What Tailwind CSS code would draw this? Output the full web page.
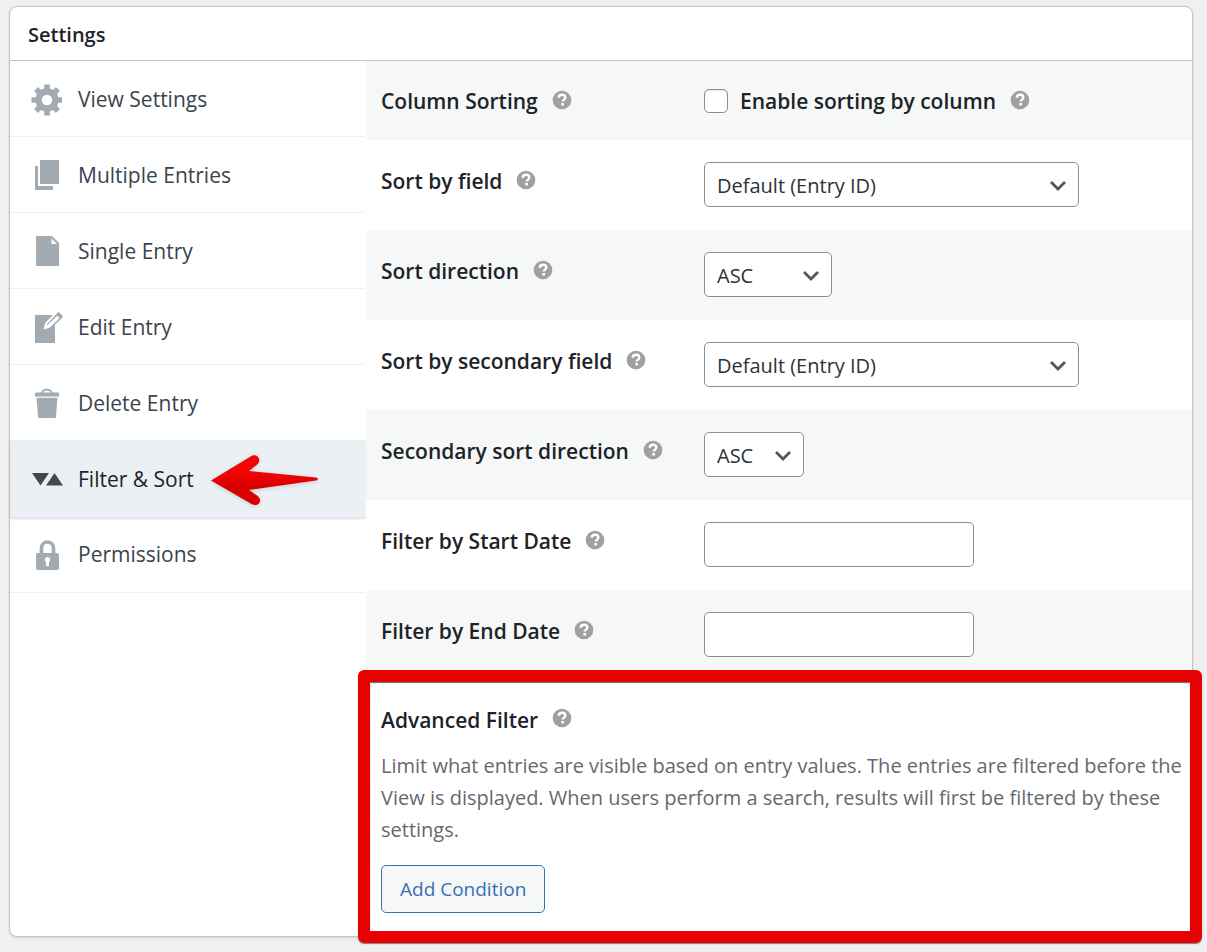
<!DOCTYPE html>
<html lang="en">
<head>
  <meta charset="UTF-8">
  <meta name="viewport" content="width=device-width, initial-scale=1.0">
  <title>Settings</title>
  <script src="https://cdn.jsdelivr.net/npm/@tailwindcss/browser@4"></script>
</head>
<body class="bg-[#f0f0f1] min-h-screen pt-[6px] pl-[9px] pr-[14px] pb-[15px] font-['Open_Sans','Noto_Sans',sans-serif] text-[#1d2327]">
  <!-- shared icons -->
  <svg class="hidden">
    <symbol id="help" viewBox="0 0 20 20">
      <circle cx="10" cy="10" r="9.3" fill="#a0a0a0"/>
      <path d="M6.700 7.800C6.800 5.700 8.200 4.800 10.100 4.800c1.900 0 3.200 1 3.200 2.600 0 1.300-.7 1.900-1.500 2.500-.8.5-1.100.8-1.100 1.700" fill="none" stroke="#fff" stroke-width="2.400"/>
      <rect x="9.300" y="13" width="2.700" height="2.500" fill="#fff"/>
    </symbol>
    <symbol id="chevron" viewBox="0 0 18 12">
      <path d="M2 2l7 7 7-7" fill="none" stroke="#50575e" stroke-width="2.800"/>
    </symbol>
  </svg>

  <main class="bg-white border border-[#c3c4c7] rounded-lg shadow-sm">
    <h2 class="h-[54px] px-[18px] pt-0.5 flex items-center border-b border-[#c3c4c7] text-xl font-semibold">Settings</h2>
    <div class="flex">
      <nav class="w-[356px] shrink-0 pr-px text-[21px] text-[#3c434a]">
        <a href="#view" class="h-[76px] pl-5 pt-0.5 flex items-center gap-4 border-b border-[#ebf0f5]">
          <svg class="size-8" viewBox="-17 -16 32 32" fill="#a2aab2">
            <circle r="8.500" fill="none" stroke="#a2aab2" stroke-width="6.400"/>
            <path d="M-2.800-15.500h5.600V-10h-5.600zM-2.800 10h5.600v5.500h-5.600zM-15.500-2.800h5.500v5.600h-5.500zM10-2.800h5.500v5.600H10z"/>
            <path d="M-2.800-15.500h5.600V-10h-5.600zM-2.800 10h5.600v5.500h-5.600zM-15.500-2.800h5.500v5.600h-5.500zM10-2.800h5.500v5.600H10z" transform="rotate(45)"/>
          </svg>
          View Settings
        </a>
        <a href="#multiple" class="h-[76px] pl-5 pt-0.5 flex items-center gap-4 border-b border-[#ebf0f5]">
          <svg class="size-8" viewBox="0 1 32 32" fill="#a2aab2">
            <path d="M10 1h19v24H10zM5 7h3v20h15v4H5z"/>
          </svg>
          Multiple Entries
        </a>
        <a href="#single" class="h-[76px] pl-5 pt-0.5 flex items-center gap-4 border-b border-[#ebf0f5]">
          <svg class="size-8" viewBox="0 1 32 32" fill="#a2aab2">
            <path d="M6 1h16l7 7v23H6z"/>
            <path d="M21.500 3.500V9H27z" fill="#fff"/>
          </svg>
          Single Entry
        </a>
        <a href="#edit" class="h-[76px] pl-5 pt-0.5 flex items-center gap-4 border-b border-[#ebf0f5]">
          <svg class="size-8 overflow-visible" viewBox="0 1 32 32" fill="#a2aab2">
            <path d="M5 4h18L15.500 11.500l-2 6 .5 1 6-2.500 5-5V32H5z"/>
            <path d="M16.500 18l1.200-4.200L27.500 4l2.800 2.800-9.800 9.200z" fill="#fff"/>
            <path d="M25.500 4l2.200-2.300c.6-.6 1.200-.6 1.800 0l3 3c.6.6.6 1.200 0 1.800L21 17.500l-3.500 1.300 2.500-2L29.500 7l-2.300-2.200L17 14.500V13z"/>
          </svg>
          Edit Entry
        </a>
        <a href="#delete" class="h-[76px] pl-5 pt-0.5 flex items-center gap-4 border-b border-[#ebf0f5]">
          <svg class="size-8" viewBox="0 0 32 32" fill="#a2aab2">
            <path d="M12 5c.5-4.500 9-4.500 9.500 0" fill="none" stroke="#a2aab2" stroke-width="1.800"/>
            <path d="M6 4.500h22c.7 0 1 .3 1 1v3H5v-3c0-.7.3-1 1-1zM6.500 9.700h21L26 28.500c-.1 1-.7 1.500-1.600 1.500H9.600c-.9 0-1.500-.5-1.600-1.500z"/>
          </svg>
          Delete Entry
        </a>
        <a href="#filter" aria-current="page" class="relative h-[77px] pl-5 pt-0.5 flex items-center gap-4 border-b border-[#dfe6f3] bg-[#ebf0f5] text-[#1d2327] shadow-sm">
          <svg class="size-8 overflow-visible" viewBox="0 0 32 32" fill="#41484f">
            <path d="M2 9h17l-8.500 12.500zM16 21.500h17L24.500 9z"/>
          </svg>
          Filter &amp; Sort
          <!-- pointer arrow -->
          <svg class="absolute left-[200px] top-[13px] w-[112px] h-[52px] drop-shadow-sm" viewBox="0 0 112 52">
            <defs>
              <linearGradient id="red" x1="0" y1="0" x2="0" y2="1">
                <stop offset=".35" stop-color="#f20505"/>
                <stop offset=".6" stop-color="#d90000"/>
              </linearGradient>
            </defs>
            <path d="M1 26.500L41 2.200c6-3.500 11 3.500 6.500 8L39 17l67 6.500c2.500.5 2.500 2.800 0 3L39 36l8 5.500c6.500 4.500 1.500 12.500-5.500 8.500z" fill="url(#red)"/>
          </svg>
        </a>
        <a href="#permissions" class="h-[75px] pl-5 flex items-center gap-4 border-b border-[#ebf0f5]">
          <svg class="size-8" viewBox="0 0 32 32" fill="#a2aab2">
            <path d="M11.500 16V9c0-8 12-8 12 0v7" fill="none" stroke="#a2aab2" stroke-width="3.600"/>
            <rect x="6" y="14" width="23" height="17" rx="2"/>
            <path d="M17.500 18a2.800 2.800 0 0 1 1.500 5.100V27h-3v-3.900A2.800 2.800 0 0 1 17.500 18z" fill="#fff"/>
          </svg>
          Permissions
        </a>
      </nav>

      <form class="flex-1 min-w-0 text-[21px]">
        <div class="h-[79px] px-[15px] flex items-center bg-[#f6f7f7]">
          <div class="w-[323px] shrink-0 pt-0.5 flex items-center gap-[14px] font-semibold">
            Column Sorting
            <svg class="size-5 mb-1" role="img" aria-label="Help"><use href="#help"/></svg>
          </div>
          <input type="checkbox" id="columnSort" class="appearance-none size-6 mr-3 bg-white border border-[#8c8f94] rounded-[5px] shadow-[inset_0_1px_2px_rgba(0,0,0,0.1)]">
          <div class="pt-0.5 flex items-center gap-[14px] font-semibold">
            <label for="columnSort">Enable sorting by column</label>
            <svg class="size-5 mb-1" role="img" aria-label="Help"><use href="#help"/></svg>
          </div>
        </div>

        <div class="h-[90px] px-[15px] pb-0.5 flex items-center">
          <div class="w-[323px] shrink-0 pb-1 flex items-center gap-[14px] font-semibold">
            <label for="sortField">Sort by field</label>
            <svg class="size-5 mb-1" role="img" aria-label="Help"><use href="#help"/></svg>
          </div>
          <div class="relative w-[375px]">
            <select id="sortField" class="appearance-none w-full h-[45px] px-3 pt-[3px] bg-white border border-[#8c8f94] rounded-[5px] text-xl text-[#2c3338]">
              <option>Default (Entry ID)</option>
            </select>
            <svg class="absolute right-3 top-[18px] w-[18px] h-3 pointer-events-none"><use href="#chevron"/></svg>
          </div>
        </div>

        <div class="h-[90px] px-[15px] pb-0.5 flex items-center bg-[#f6f7f7]">
          <div class="w-[323px] shrink-0 pb-1 flex items-center gap-[14px] font-semibold">
            <label for="sortDirection">Sort direction</label>
            <svg class="size-5 mb-1" role="img" aria-label="Help"><use href="#help"/></svg>
          </div>
          <div class="relative w-32">
            <select id="sortDirection" class="appearance-none w-full h-[45px] px-3 pt-[3px] bg-white border border-[#8c8f94] rounded-[5px] text-xl text-[#2c3338]">
              <option>ASC</option>
              <option>DESC</option>
            </select>
            <svg class="absolute right-3 top-[18px] w-[18px] h-3 pointer-events-none"><use href="#chevron"/></svg>
          </div>
        </div>

        <div class="h-[90px] px-[15px] pb-0.5 flex items-center">
          <div class="w-[323px] shrink-0 pb-1 flex items-center gap-[14px] font-semibold">
            <label for="sortField2">Sort by secondary field</label>
            <svg class="size-5 mb-1" role="img" aria-label="Help"><use href="#help"/></svg>
          </div>
          <div class="relative w-[375px]">
            <select id="sortField2" class="appearance-none w-full h-[45px] px-3 pt-[3px] bg-white border border-[#8c8f94] rounded-[5px] text-xl text-[#2c3338]">
              <option>Default (Entry ID)</option>
            </select>
            <svg class="absolute right-3 top-[18px] w-[18px] h-3 pointer-events-none"><use href="#chevron"/></svg>
          </div>
        </div>

        <div class="h-[90px] px-[15px] pb-0.5 flex items-center bg-[#f6f7f7]">
          <div class="w-[323px] shrink-0 pb-1 flex items-center gap-[14px] font-semibold">
            <label for="sortDirection2">Secondary sort direction</label>
            <svg class="size-5 mb-1" role="img" aria-label="Help"><use href="#help"/></svg>
          </div>
          <div class="relative w-[100px]">
            <select id="sortDirection2" class="appearance-none w-full h-[45px] px-3 pt-[3px] bg-white border border-[#8c8f94] rounded-[5px] text-xl text-[#2c3338]">
              <option>ASC</option>
              <option>DESC</option>
            </select>
            <svg class="absolute right-3 top-[18px] w-[18px] h-3 pointer-events-none"><use href="#chevron"/></svg>
          </div>
        </div>

        <div class="h-[90px] px-[15px] pb-0.5 flex items-center">
          <div class="w-[323px] shrink-0 pb-1 flex items-center gap-[14px] font-semibold">
            <label for="startDate">Filter by Start Date</label>
            <svg class="size-5 mb-1" role="img" aria-label="Help"><use href="#help"/></svg>
          </div>
          <input type="text" id="startDate" class="w-[270px] h-[45px] px-3 bg-white border border-[#8c8f94] rounded-[5px] text-xl">
        </div>

        <div class="h-[90px] px-[15px] pb-0.5 flex items-center bg-[#f6f7f7]">
          <div class="w-[323px] shrink-0 pb-1 flex items-center gap-[14px] font-semibold">
            <label for="endDate">Filter by End Date</label>
            <svg class="size-5 mb-1" role="img" aria-label="Help"><use href="#help"/></svg>
          </div>
          <input type="text" id="endDate" class="w-[270px] h-[45px] px-3 bg-white border border-[#8c8f94] rounded-[5px] text-xl">
        </div>

        <section class="relative pl-[15px] pr-1 pt-6 pb-[23px] bg-white">
          <!-- highlight frame -->
          <div class="absolute -top-[10px] -bottom-[7px] -left-2 -right-[10px] border-12 border-[#e60202] rounded-md shadow-[0_1px_1px_rgba(0,0,0,0.5),inset_0_1px_1px_rgba(0,0,0,0.6)] pointer-events-none"></div>
          <h3 class="flex items-center gap-[14px] leading-8 font-semibold">
            Advanced Filter
            <svg class="size-5 mb-1" role="img" aria-label="Help"><use href="#help"/></svg>
          </h3>
          <p class="mt-[14px] text-xl leading-[32px] text-[#646970]">Limit what entries are visible based on entry values. The entries are filtered before the View is displayed. When users perform a search, results will first be filtered by these settings.</p>
          <button type="button" class="block mt-[19px] h-12 px-[18px] bg-[#f6f7f7] border border-[#3a6eb5] rounded-[5px] text-[19px] text-[#3a6eb5]">Add Condition</button>
        </section>
      </form>
    </div>
  </main>
</body>
</html>
